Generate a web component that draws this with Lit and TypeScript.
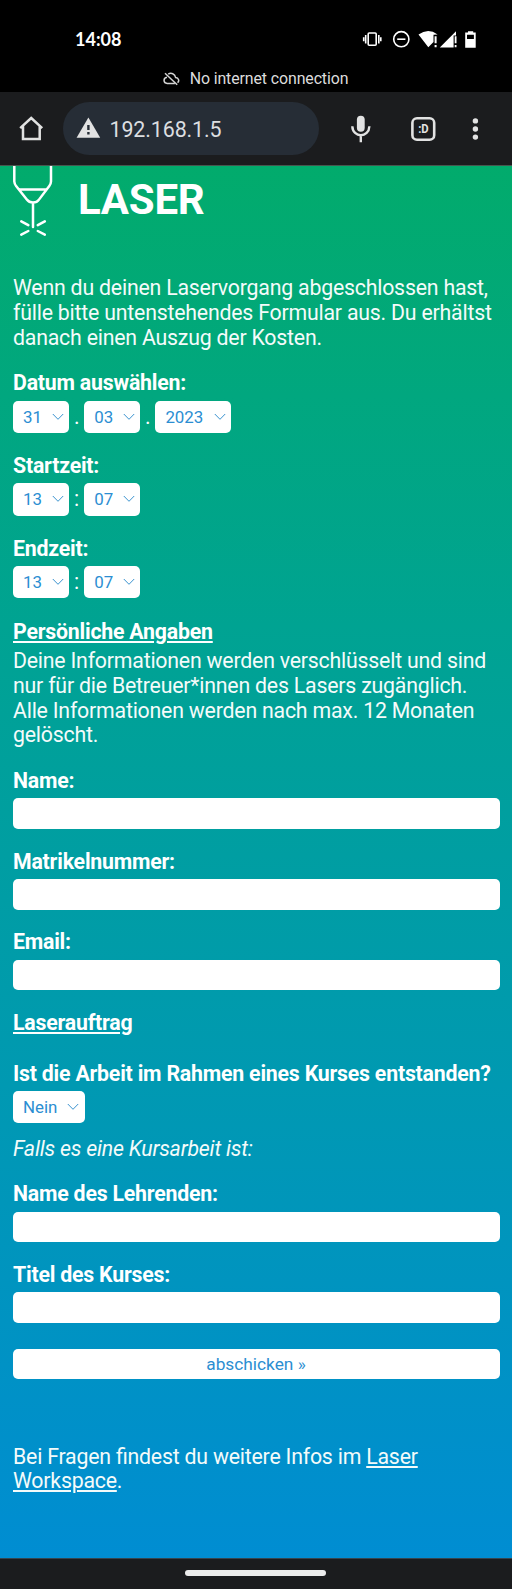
import { LitElement, html, css } from "lit";
import { customElement } from "lit/decorators.js";

const choice = (value: string, cls = "") => html`
  <div class="select ${cls}" role="combobox">
    <span>${value}</span>
    <svg class="chev" width="12" height="8" viewBox="0 0 12 8"><path d="M.8 1 6 6.3 11.2 1" fill="none" stroke="#3b93cf" stroke-width="1"/></svg>
  </div>`;

const field = (label: string, cls = "") => html`
  <label class="field ${cls}"><b>${label}</b><input type="text" /></label>`;

@customElement("app-root")
export class AppRoot extends LitElement {
  static styles = css`
    :host { display: block; width: 512px; height: 1589px; overflow: hidden; font-family: Roboto, sans-serif; background: #1b1c1e; }
    * { box-sizing: border-box; }
    svg { display: block; flex: none; }
    .page { display: flex; flex-direction: column; height: 1589px; }
    .system { height: 92px; background: #000; display: flex; flex-direction: column; color: #fff; }
    .status { height: 64px; padding: 14px 34px 0 75px; display: flex; align-items: center; justify-content: space-between; }
    .clock { font: 700 18px/22px Lato, sans-serif; padding-bottom: 1px; }
    .offline { height: 28px; display: flex; justify-content: center; align-items: center; gap: 10px; font-size: 15.9px; letter-spacing: -0.1px; line-height: 20px; color: #dcdcdc; padding: 2px 1px 0 0; }
    .offline span { white-space: nowrap; }
    .bar { height: 74px; background: #1b1c1e; border-bottom: 1px solid #46574f; display: flex; align-items: center; }
    .home { margin-left: 18px; }
    .url { margin-left: 18.5px; width: 256.5px; height: 53px; border-radius: 27px; background: #262d36; display: flex; align-items: center; padding-left: 13px; gap: 9px; color: #dcdee0; font-size: 21.4px; letter-spacing: -0.1px; }
    .url span { padding-top: 1px; }
    .mic { margin-left: 32px; }
    .tabs { margin-left: 39px; }
    .more { margin-left: 34.5px; }
    .content { height: 1392px; padding: 0 12px 0 13px; background: linear-gradient(#02ab6c, #00a392 33%, #0099b2 66%, #008dd2); color: #fff; font-size: 21.3px; letter-spacing: -0.21px; line-height: 24.65px; font-feature-settings: "liga" 1; display: flex; flex-direction: column; align-items: stretch; }
    .brand { display: flex; height: 110.2px; gap: 25px; }
    h1 { margin: 8.5px 0 0; font-size: 42px; line-height: 49px; font-weight: 700; letter-spacing: -0.25px; }
    p { margin: 0; color: #f4fbfa; white-space: nowrap; }
    b { font-weight: 700; display: block; white-space: nowrap; }
    .group { margin-top: 21.1px; }
    .row { display: flex; margin-top: 4.7px; height: 32.3px; align-items: center; }
    .sep { width: 15.2px; text-align: center; line-height: 24px; }
    .select { width: 56px; height: 32.3px; background: #fff; border-radius: 5px; color: #2b8ed2; display: flex; align-items: center; justify-content: space-between; padding: 0 5.5px 0 10px; font-size: 16.9px; font-weight: 400; letter-spacing: 0; line-height: 20px; }
    .year { width: 76px; }
    .course { width: 71.6px; }
    u { text-decoration-thickness: 1.6px; text-underline-offset: 2px; }
    .personal { margin-top: 21.3px; }
    .privacy { margin-top: 4.9px; }
    .field { display: block; margin-top: 20.6px; }
    .first { margin-top: 21.3px; }
    input { display: block; width: 487px; height: 30.7px; border: 0; border-radius: 5px; background: #fff; margin: 4.7px 0 0; padding: 0 10px; }
    .job { margin-top: 20.6px; }
    .question { margin-top: 26px; }
    .hint { margin-top: 13.3px; font-style: italic; }
    .teacher { margin-top: 21.1px; }
    button { margin-top: 26px; width: 487px; height: 30.4px; flex: none; border: 0; border-radius: 5px; padding: 0 1px 1px 0; background: #fff; color: #2b8ed2; font: 400 17.3px Roboto, sans-serif; }
    .foot { margin-top: 65.3px; }
    .nav { height: 31px; flex: none; display: flex; justify-content: center; padding: 11px 1px 0 0; border-top: 1px solid #34444f; }
    .pill { width: 141px; height: 6px; border-radius: 3px; background: #ececec; }
  `;

  render() {
    return html`<div class="page">
      <div class="system">
        <div class="status">
          <span class="clock">14:08</span>
          <svg width="116" height="22" viewBox="362 28 116 22">
            <g fill="none" stroke="#fff" stroke-width="1.6">
              <rect x="368.2" y="33" width="8" height="12.2" rx="1" /><path d="M365.7 35v8.5M363.7 37.2v4M378.8 35v8.5M380.8 37.2v4" />
              <circle cx="401.3" cy="39.2" r="7.6" /><path d="M397.2 39.2h8.2" />
            </g>
            <g fill="#fff">
              <path d="M418.5 34.6Q428 27.5 437.6 34.4L433.5 34.7V42L428.3 47.2Z" />
              <path d="M434.6 36.2h2v7h-2zM434.6 45h2v2.2h-2z" />
              <path d="M439.8 47.4 456 31.2V35.5H453.6V47.4Z" /><path d="M454.7 36.2h1.8v7h-1.8zM454.7 45h1.8v2.2h-1.8z" />
              <path fill-rule="evenodd" d="M468 31.3h5.2v1.3h2.5V47.7H465.2V32.6H468ZM467 34.7v4.2h6.9v-4.2Z" />
            </g>
          </svg>
        </div>
        <div class="offline">
          <svg width="17" height="14" viewBox="0 0 17 14" fill="none" stroke="#d4d4d4" stroke-width="1.5"><path d="M5.2 2.2C8 .3 12 1.8 12.6 5.5c3.2.2 4 3.8 1.9 5.2M11.8 11.5H4.2C.2 11.3-.1 6 4 5.3M2 1.2 14.2 12.7" /></svg>
          <span>No internet connection</span>
        </div>
      </div>
      <div class="bar">
        <svg class="home" width="26" height="26" viewBox="18 116 26 26"><path d="M20.2 128.2 31.2 118 42.2 128.2M23 126.3V139H39.7V126.3" fill="none" stroke="#e2e2e2" stroke-width="2.5" /></svg>
        <div class="url">
          <svg width="25" height="24" viewBox="76 116.5 25 24"><path d="M88.4 117 100.2 137.2H76.6Z" fill="#e2e2e2" /><path d="M88.4 124.6v5M88.4 131.4v2.5" stroke="#262d36" stroke-width="2.4" /></svg>
          <span>192.168.1.5</span>
        </div>
        <svg class="mic" width="20" height="28" viewBox="351 114.5 20 28"><rect x="356.9" y="115.2" width="7.8" height="16" rx="3.9" fill="#e2e2e2" /><path d="M352.3 125.7c.5 12 16.6 12 17.1 0M360.8 134.6v7.2" fill="none" stroke="#e2e2e2" stroke-width="2.4" /></svg>
        <svg class="tabs" width="26" height="26" viewBox="410 115.5 26 26"><rect x="412.4" y="117.7" width="21.8" height="21.6" rx="4.6" fill="none" stroke="#e2e2e2" stroke-width="2.6" /><text x="423.4" y="132.9" font-family="Roboto" font-size="12.4" font-weight="700" fill="#e2e2e2" text-anchor="middle" textLength="10.5" lengthAdjust="spacingAndGlyphs">:D</text></svg>
        <svg class="more" width="8" height="24" viewBox="471 116.4 8 24" fill="#e2e2e2"><circle cx="475.4" cy="120.3" r="2.7" /><circle cx="475.4" cy="128.4" r="2.7" /><circle cx="475.4" cy="136.5" r="2.7" /></svg>
      </div>
      <div class="content">
        <div class="brand">
          <svg width="40" height="72" viewBox="13 166 40 72" fill="none" stroke="#fff" stroke-width="2.5" stroke-linecap="round"><path d="M14.3 164V181.5Q14.5 184 16.1 186L26.8 199.6Q29 202.6 33 202.6T39 199.6L49.3 186Q50.9 184 51 181.5V164M19.5 189.4H46M33 203V227M21.3 221.3 28.3 225.2M44.8 221.3 37.8 225.2M21.3 234.6 28.3 231M44.8 234.6 37.8 231" /></svg>
          <h1>LASER</h1>
        </div>
        <p>Wenn du deinen Laservorgang abgeschlossen hast,<br />fülle bitte untenstehendes Formular aus. Du erhältst<br />danach einen Auszug der Kosten.</p>
        <div class="group"><b>Datum auswählen:</b><div class="row">${choice("31")}<span class="sep">.</span>${choice("03")}<span class="sep">.</span>${choice("2023", "year")}</div></div>
        <div class="group"><b>Startzeit:</b><div class="row">${choice("13")}<span class="sep">:</span>${choice("07")}</div></div>
        <div class="group"><b>Endzeit:</b><div class="row">${choice("13")}<span class="sep">:</span>${choice("07")}</div></div>
        <b class="personal"><u>Persönliche Angaben</u></b>
        <p class="privacy">Deine Informationen werden verschlüsselt und sind<br />nur für die Betreuer*innen des Lasers zugänglich.<br />Alle Informationen werden nach max. 12 Monaten<br />gelöscht.</p>
        ${field("Name:", "first")}${field("Matrikelnummer:")}${field("Email:")}
        <b class="job"><u>Laserauftrag</u></b>
        <b class="question">Ist die Arbeit im Rahmen eines Kurses entstanden?</b>
        <div class="row">${choice("Nein", "course")}</div>
        <p class="hint">Falls es eine Kursarbeit ist:</p>
        ${field("Name des Lehrenden:", "teacher")}${field("Titel des Kurses:")}
        <button>abschicken »</button>
        <p class="foot">Bei Fragen findest du weitere Infos im <u>Laser<br />Workspace</u>.</p>
      </div>
      <div class="nav"><div class="pill"></div></div>
    </div>`;
  }
}
